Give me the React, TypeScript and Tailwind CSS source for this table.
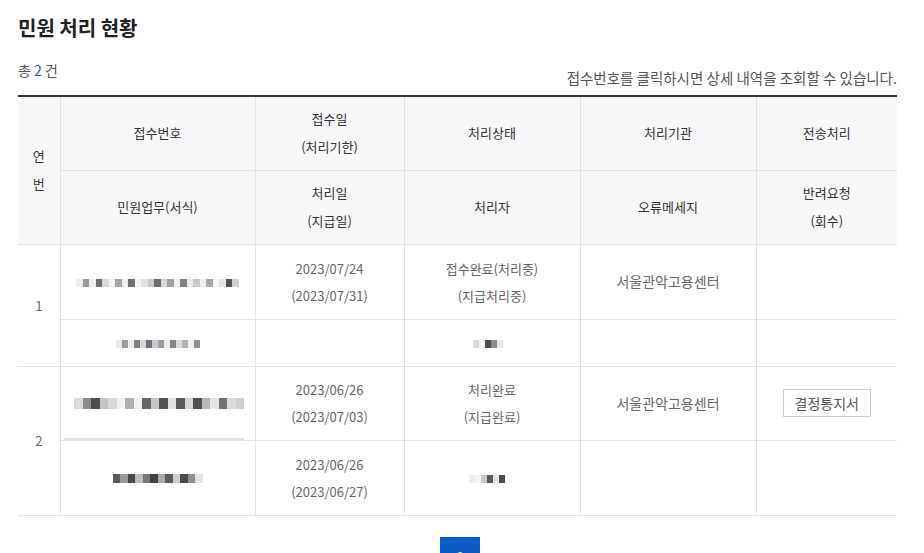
import React from "react";

// pixelated (masked) cell content
function Masked({ cells, size = 5, className = "" }: { cells: string[]; size?: number; className?: string }) {
  return (
    <div className={`inline-flex items-center ${className}`}>
      {cells.map((c, i) => (
        <span key={i} style={{ background: c, width: size, height: size + 2 }} className="inline-block" />
      ))}
    </div>
  );
}

const maskA = ["#eee", "#9b97a0", "#eee", "#6d6b73", "#d8d8dc", "#f3f3f3", "#a3a3a8", "#eee", "#6d707a", "#f5f5f5", "#e3e1e8", "#c9c7cf", "#6b6a70", "#d7d6da", "#a2a0a6", "#f0f0f0", "#7f7f85", "#e9e9ec", "#c8c8cc", "#eee", "#a8a8ad", "#f7f7f7", "#e6e6e6", "#4f5556", "#d0d0d0"];
const maskB = ["#e6e6ea", "#9a9aa0", "#ececec", "#7d7d84", "#d8d8dc", "#6f6f76", "#c9c9cd", "#9d9da2", "#ededed", "#838388", "#dcdcdc", "#b0b0b5", "#eee", "#8f8f94"];
const maskC = ["#ddd", "#f3f3f3", "#4d4d52", "#8a8a8f", "#e6e6e6"];
const maskD = ["#dedbd3", "#8c8b86", "#4e4d4f", "#c7c5c0", "#d9d9d9", "#f1f1f1", "#b0b0b0", "#f2f2f2", "#656568", "#c4c6cc", "#50535a", "#e2e2e2", "#59585c", "#d6d6d6", "#4f5054", "#b8b8bc", "#e4e4e4", "#707075", "#dadada", "#cfcfd3"];
const maskE = ["#5c5c5e", "#9a9a9c", "#4a4a4c", "#bdbdbf", "#777779", "#3f3f42", "#a9a9ab", "#5a5a5d", "#cccccd", "#49494b", "#8d8d90", "#e3e3e3"];
const maskF = ["#eee", "#f5f5f5", "#c8c8c8", "#5a5a5a", "#e4e4e4", "#4b4b4b"];

const th = "border-l border-b border-[#e3e3e3] text-center align-middle font-normal text-[13px] leading-[28px] text-[#333]";
const td = "border-l border-b border-[#e3e3e3] text-center align-middle text-[13px] leading-[27px] text-[#666]";

export default function App() {
  return (
    <div className="bg-white min-h-[553px] font-['Noto_Sans_CJK_KR','Noto_Sans',sans-serif]">
      <div className="ml-[18px] w-[879px] pt-[14px]">
        <h1 className="text-[20px] leading-[28px] font-bold text-[#222]">민원 처리 현황</h1>

        <div className="mt-[18px] mb-[7px] flex justify-between">
          <p className="text-[14px] leading-[20px] text-[#555]">
            총 <span className="text-[#2a5db0]">2</span> 건
          </p>
          <p className="mt-[8px] text-[14.5px] leading-[20px] text-[#555]">
            접수번호를 클릭하시면 상세 내역을 조회할 수 있습니다.
          </p>
        </div>

        <table className="w-full border-collapse border-t-2 border-[#333] table-fixed">
          <colgroup>
            <col className="w-[42px]" />
            <col className="w-[195px]" />
            <col className="w-[149px]" />
            <col className="w-[176px]" />
            <col className="w-[176px]" />
            <col />
          </colgroup>
          <thead className="bg-[#f8f8fa]">
            <tr className="h-[74px]">
              <th rowSpan={2} className={`${th} border-l-0`}>
                연<br />번
              </th>
              <th className={th}>접수번호</th>
              <th className={th}>
                접수일<br />(처리기한)
              </th>
              <th className={th}>처리상태</th>
              <th className={th}>처리기관</th>
              <th className={th}>전송처리</th>
            </tr>
            <tr className="h-[74px]">
              <th className={th}>민원업무(서식)</th>
              <th className={th}>
                처리일<br />(지급일)
              </th>
              <th className={th}>처리자</th>
              <th className={th}>오류메세지</th>
              <th className={th}>
                반려요청<br />(회수)
              </th>
            </tr>
          </thead>
          <tbody>
            <tr className="h-[75px]">
              <td rowSpan={2} className={`${td} border-l-0`}>1</td>
              <td className={td}>
                <Masked cells={maskA} size={6.5} className="mt-[-6px]" />
              </td>
              <td className={td}>
                2023/07/24<br />(2023/07/31)
              </td>
              <td className={td}>
                접수완료(처리중)<br />(지급처리중)
              </td>
              <td className={`${td} text-[14px]`}>서울관악고용센터</td>
              <td className={td}></td>
            </tr>
            <tr className="h-[47px]">
              <td className={td}>
                <Masked cells={maskB} size={6} className="mt-[-4px]" />
              </td>
              <td className={td}></td>
              <td className={td}>
                <Masked cells={maskC} size={6} className="mt-[-6px] ml-[-8px]" />
              </td>
              <td className={td}></td>
              <td className={td}></td>
            </tr>
            <tr className="h-[74px]">
              <td rowSpan={2} className={`${td} border-l-0`}>2</td>
              <td className={`${td} relative`}>
                <Masked cells={maskD} size={8.5} className="mt-[-6px] ml-[3px]" />
                <span className="absolute left-[3px] bottom-[-1px] w-[180px] h-[3px] bg-[#e2e2e2]" />
              </td>
              <td className={td}>
                2023/06/26<br />(2023/07/03)
              </td>
              <td className={td}>
                처리완료<br />(지급완료)
              </td>
              <td className={`${td} text-[14px]`}>서울관악고용센터</td>
              <td className={td}>
                <button className="h-[28px] px-[11px] border border-[#cfcfcf] bg-white text-[14px] leading-[26px] text-[#555]">
                  결정통지서
                </button>
              </td>
            </tr>
            <tr className="h-[75px]">
              <td className={td}>
                <Masked cells={maskE} size={7.5} className="mt-[4px]" />
              </td>
              <td className={td}>
                2023/06/26<br />(2023/06/27)
              </td>
              <td className={td}>
                <Masked cells={maskF} size={6} className="mt-[2px] ml-[-10px]" />
              </td>
              <td className={td}></td>
              <td className={td}></td>
            </tr>
          </tbody>
        </table>

        <div className="mt-[21px] flex justify-center pl-[5px]">
          <button className="w-10 h-10 bg-[#0b5dc5] text-white text-[13px] font-bold">1</button>
        </div>
      </div>
    </div>
  );
}
